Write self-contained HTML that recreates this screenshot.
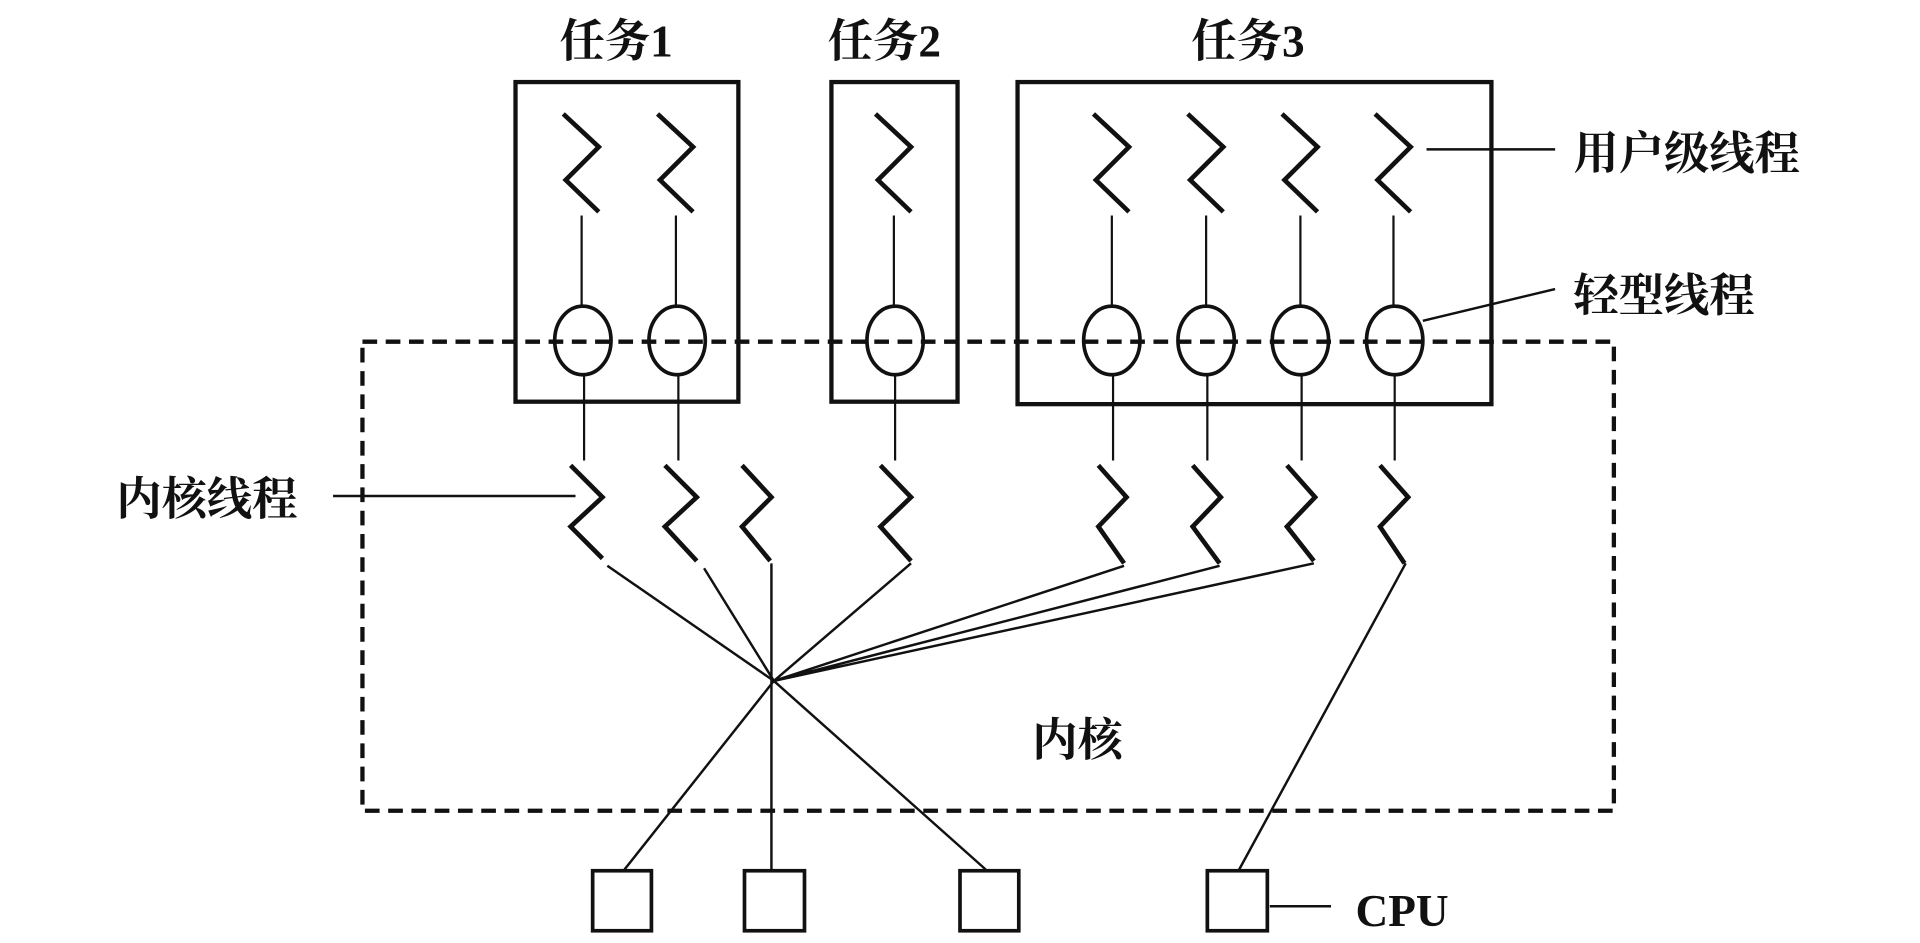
<!DOCTYPE html>
<html><head><meta charset="utf-8"><style>
html,body{margin:0;padding:0;background:#fff;}
svg{display:block}
text{font-family:"Liberation Serif","Noto Serif CJK SC","Noto Sans CJK SC",serif;fill:#111;font-weight:bold}
</style></head><body>
<svg width="1920" height="943" viewBox="0 0 1568 770" preserveAspectRatio="none" xmlns="http://www.w3.org/2000/svg">
<rect width="1568" height="770" fill="#fff"/>
<g stroke="#111" fill="none">
<rect x="421" y="67" width="182" height="261" stroke-width="3.5"/>
<rect x="679" y="67" width="103" height="261" stroke-width="3.5"/>
<rect x="831" y="67" width="387" height="263" stroke-width="3.5"/>
<rect x="296" y="279" width="1022" height="383" stroke-width="3.5" stroke-dasharray="12 7"/>
</g>
<g stroke="#111" fill="none" stroke-width="3.8">
<path d="M460 93 L489 120 L462 147 L489 173"/>
<path d="M537 93 L566 120 L539 147 L566 173"/>
<path d="M715 93 L744 120 L717 147 L744 173"/>
<path d="M893 93 L922 120 L895 147 L922 173"/>
<path d="M970 93 L999 120 L972 147 L999 173"/>
<path d="M1047 93 L1076 120 L1049 147 L1076 173"/>
<path d="M1123 93 L1152 120 L1125 147 L1152 173"/>
</g>
<g stroke="#111" fill="none" stroke-width="1.8">
<path d="M475 176V250M552 176V250M730 176V250M908 176V250M985 176V250M1062 176V250M1138 176V250"/>
<path d="M477 306V376M554 306V376M731 306V376M909 306V376M986 306V376M1063 306V376M1139 306V376"/>
</g>
<g stroke="#111" fill="none" stroke-width="3">
<ellipse cx="476" cy="278" rx="23" ry="28"/>
<ellipse cx="553" cy="278" rx="23" ry="28"/>
<ellipse cx="731" cy="278" rx="23" ry="28"/>
<ellipse cx="908" cy="278" rx="23" ry="28"/>
<ellipse cx="985" cy="278" rx="23" ry="28"/>
<ellipse cx="1062" cy="278" rx="23" ry="28"/>
<ellipse cx="1139" cy="278" rx="23" ry="28"/>
</g>
<g stroke="#111" fill="none" stroke-width="3.8">
<path d="M466 380 L492 406 L466 430 L492 456"/>
<path d="M543 380 L569 406 L543 430 L569 458"/>
<path d="M606 380 L630 406 L606 430 L629 458"/>
<path d="M719 380 L744 406 L719 430 L744 458"/>
<path d="M897 380 L920 406 L897 430 L918 460"/>
<path d="M974 380 L997 406 L974 430 L996 460"/>
<path d="M1051 380 L1074 406 L1051 430 L1073 458"/>
<path d="M1127 380 L1150 406 L1127 430 L1147 460"/>
</g>
<g stroke="#111" fill="none" stroke-width="2">
<path d="M496 462L632 556M575 464L632 556M630 460V710M744 460L632 556M918 462L632 556M996 462L632 556M1073 460L632 556"/>
<path d="M632 556L510 710M632 556L805 710M1148 460L1012 710"/>
<path d="M272 405H470M1165 122H1270M1162 262L1270 236M1037 740H1087"/>
</g>
<g stroke="#111" fill="#fff" stroke-width="3">
<rect x="484" y="711" width="48" height="49"/>
<rect x="608" y="711" width="49" height="49"/>
<rect x="784" y="711" width="48" height="49"/>
<rect x="986" y="711" width="49" height="49"/>
</g>
<g font-size="37">
<text x="457" y="46">任务1</text>
<text x="676" y="46">任务2</text>
<text x="973" y="46">任务3</text>
<text x="1285" y="138">用户级线程</text>
<text x="1285" y="254">轻型线程</text>
<text x="95" y="420">内核线程</text>
<text x="843" y="617">内核</text>
<text x="1107" y="756" font-size="37">CPU</text>
</g>
</svg>
</body></html>
